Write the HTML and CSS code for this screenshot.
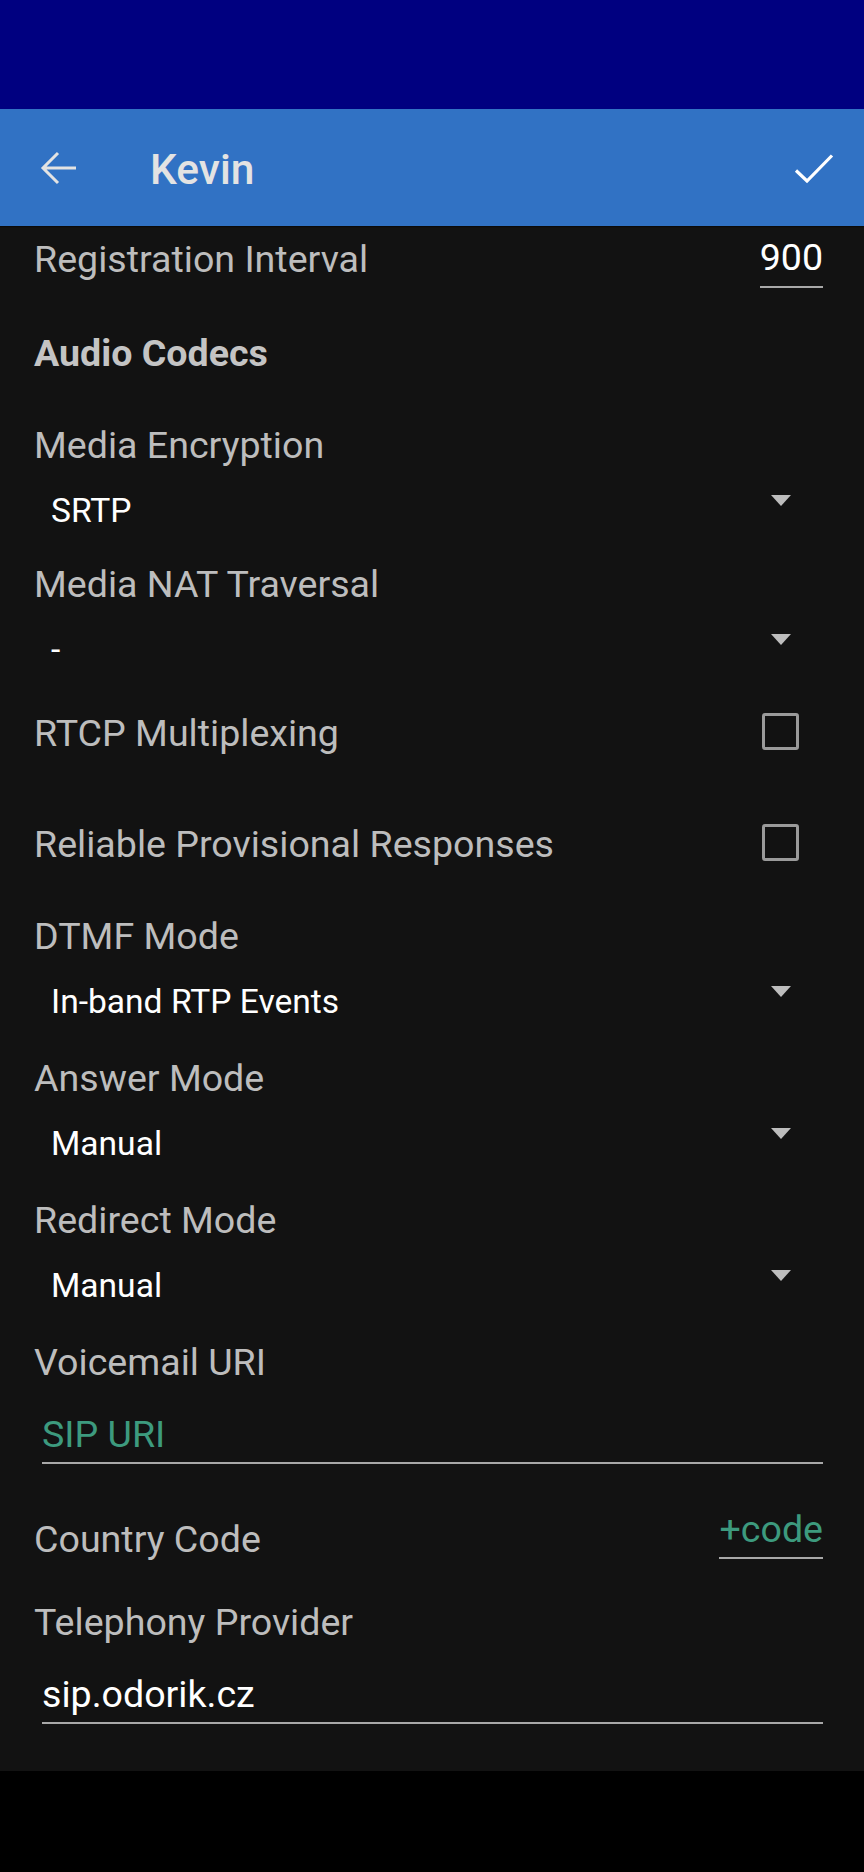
FILE: index.html
```html
<!DOCTYPE html>
<html lang="en">

<head>
    <meta charset="UTF-8" />
    <meta name="viewport" content="width=device-width, initial-scale=1.0" />
    <title>Kevin</title>
    <link rel="stylesheet" href="styles.css">
</head>

<body>
    <div class="status-bar"></div>

    <div class="app-bar">
        <svg class="back" width="40" height="40" viewBox="0 0 40 40">
            <path d="M38 20H5M20 5L5 20l15 15" fill="none" stroke="#e3e3e3" stroke-width="3" />
        </svg>
        <div class="app-title">Kevin</div>
        <svg class="done" width="40" height="40" viewBox="0 0 40 40">
            <path d="M2 22.5L13 33 38 7.5" fill="none" stroke="#fff" stroke-width="3.2" />
        </svg>
    </div>

    <div class="settings">
        <div class="row first">
            <div class="pref-title inline">Registration Interval</div>
            <div class="edit short">900</div>
        </div>

        <div class="category">Audio Codecs</div>

        <div class="pref-title wide">Media Encryption</div>
        <div class="spinner">
            <span>SRTP</span>
            <span class="arrow"></span>
        </div>

        <div class="pref-title tight">Media NAT Traversal</div>
        <div class="spinner">
            <span>-</span>
            <span class="arrow"></span>
        </div>

        <div class="row check-row">
            <div class="pref-title">RTCP Multiplexing</div>
            <div class="checkbox"></div>
        </div>

        <div class="row check-row far">
            <div class="pref-title">Reliable Provisional Responses</div>
            <div class="checkbox"></div>
        </div>

        <div class="pref-title wide">DTMF Mode</div>
        <div class="spinner">
            <span>In-band RTP Events</span>
            <span class="arrow"></span>
        </div>

        <div class="pref-title">Answer Mode</div>
        <div class="spinner">
            <span>Manual</span>
            <span class="arrow"></span>
        </div>

        <div class="pref-title">Redirect Mode</div>
        <div class="spinner">
            <span>Manual</span>
            <span class="arrow"></span>
        </div>

        <div class="pref-title">Voicemail URI</div>
        <div class="edit hint">SIP URI</div>

        <div class="row code-row">
            <div class="pref-title">Country Code</div>
            <div class="edit short hint">+code</div>
        </div>

        <div class="pref-title mid">Telephony Provider</div>
        <div class="edit">sip.odorik.cz</div>
    </div>
</body>

</html>
```

FILE: styles.css
```css
body {
    margin: 0;
    background: #000;
    font-family: Roboto, 'Noto Sans', sans-serif;
}

.status-bar {
    height: 109px;
    background: #000080;
}

.app-bar {
    height: 117px;
    background: #3172c4;
    display: flex;
    align-items: center;
    padding: 0 30px 0 38px;
    box-shadow: 0 1px 1px rgba(0, 0, 0, 0.4);
    position: relative;
}

.app-title {
    flex: 1;
    margin-left: 72px;
    margin-top: 4px;
    font-size: 42.5px;
    font-weight: 500;
    line-height: 50px;
    color: #e3e3e3;
}

.settings {
    background: #121212;
    padding: 9px 41px 47px 34px;
    font-size: 37.6px;
    line-height: 44px;
    color: #bdbdbd;
}

.row {
    display: flex;
    justify-content: space-between;
    align-items: flex-start;
}

.pref-title {
    margin-top: 34px;
}

.pref-title.wide {
    margin-top: 48px;
}

.pref-title.tight {
    margin-top: 31px;
}

.pref-title.mid {
    margin-top: 39px;
}

.pref-title.inline {
    margin-top: 2px;
}

.row .pref-title {
    white-space: nowrap;
}

.category {
    margin-top: 43px;
    font-weight: bold;
    color: #c4c4c4;
}

.spinner {
    margin-top: 24px;
    padding-left: 17px;
    display: flex;
    justify-content: space-between;
    align-items: flex-start;
    font-size: 33.6px;
    line-height: 40px;
    color: #fff;
}

.arrow {
    margin: 4px 32px 0 0;
    width: 0;
    height: 0;
    border-left: 10.5px solid transparent;
    border-right: 10.5px solid transparent;
    border-top: 11px solid #bdbdbd;
}

.check-row {
    margin-top: 41px;
}

.check-row.far {
    margin-top: 67px;
}

.check-row .pref-title {
    margin-top: 0;
}

.checkbox {
    margin: 2px 24px 0 0;
    width: 31px;
    height: 31px;
    border: 3px solid #9a9a9a;
    border-radius: 3px;
}

.edit {
    margin: 28px 0 0 8px;
    padding-bottom: 6px;
    border-bottom: 2px solid #a8a8a8;
    color: #fff;
}

.edit.short {
    margin: 0;
    padding-bottom: 7px;
}

.edit.hint {
    color: #3d9a7e;
}

.code-row {
    margin-top: 43px;
}

.code-row .pref-title {
    margin-top: 10px;
}

.code-row .edit {
    padding-bottom: 6px;
}
```
